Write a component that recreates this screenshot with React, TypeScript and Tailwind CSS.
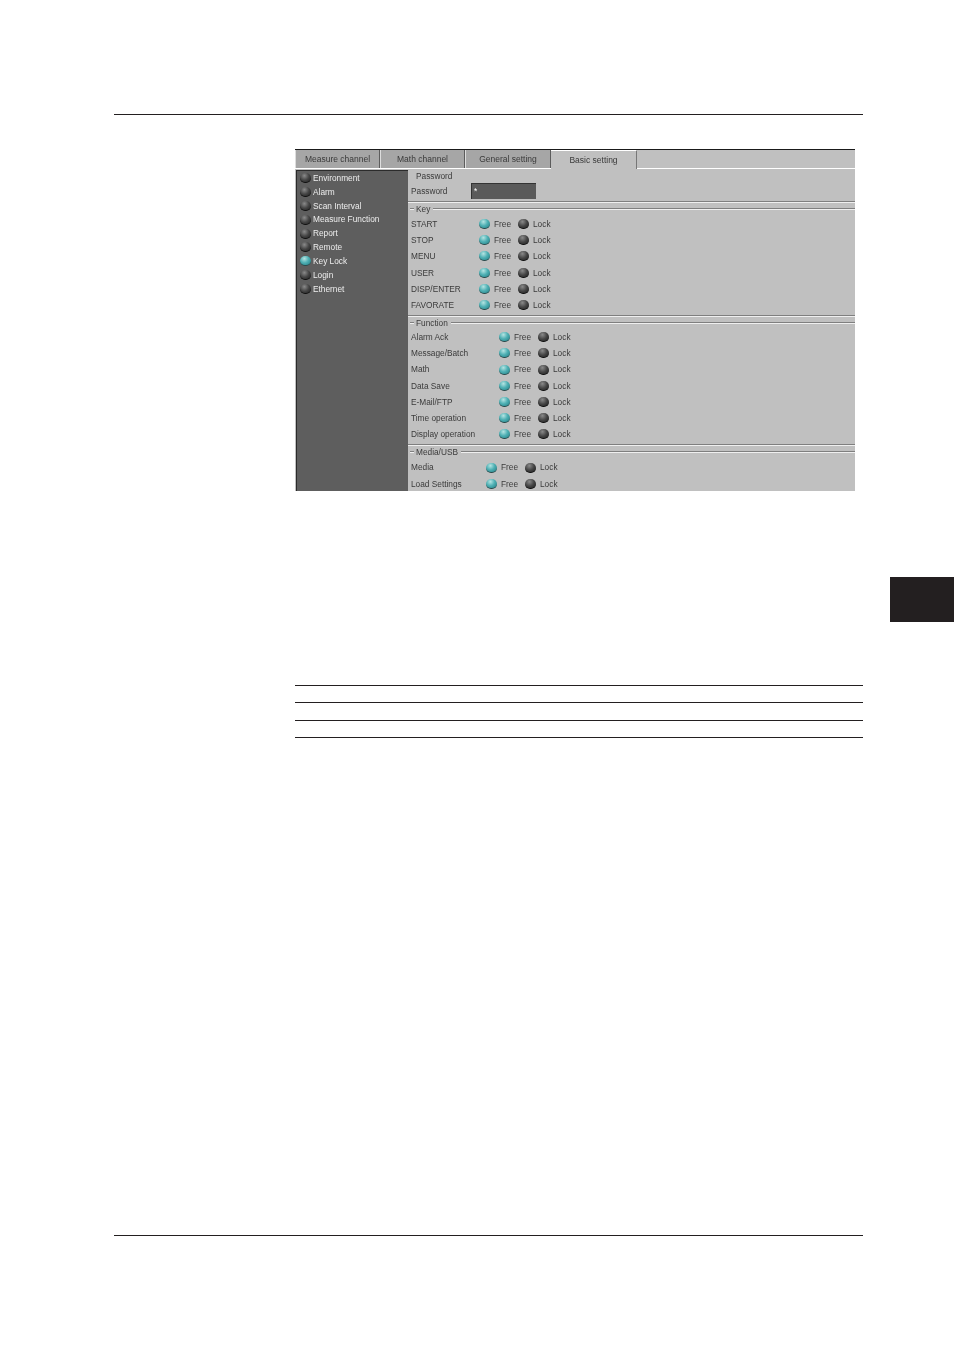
const tabs = [
  { name: "Measure channel", width: "w-[85px]" },
  { name: "Math channel", width: "w-[85px]" },
  { name: "General setting", width: "w-[86px]" },
]

const menu = ["Environment", "Alarm", "Scan Interval", "Measure Function", "Report", "Remote", "Key Lock", "Login", "Ethernet"]
const keyRows = ["START", "STOP", "MENU", "USER", "DISP/ENTER", "FAVORATE"]
const functionRows = ["Alarm Ack", "Message/Batch", "Math", "Data Save", "E-Mail/FTP", "Time operation", "Display operation"]
const mediaRows = ["Media", "Load Settings"]

const Led = ({ on }: { on: boolean }) => (
  <span
    className={
      on
        ? "block w-[11px] h-[10px] shrink-0 rounded-full border-b border-[#2c4a4c] bg-[radial-gradient(circle_at_40%_30%,#b5e4e2_0%,#4fb0b4_45%,#1f7a80_100%)]"
        : "block w-[11px] h-[10px] shrink-0 rounded-full border-b border-[#111111] bg-[radial-gradient(circle_at_40%_30%,#8a8a8a_0%,#444444_50%,#1c1c1c_100%)]"
    }
  />
)

const Row = ({ label, labelWidth }: { label: string; labelWidth: string }) => (
  <div className="flex items-center h-[16.2px] pl-[3px]">
    <span className={`${labelWidth} shrink-0 whitespace-nowrap`}>{label}</span>
    <Led on />
    <span className="w-[28px] pl-[4px] shrink-0">Free</span>
    <Led on={false} />
    <span className="pl-[4px]">Lock</span>
  </div>
)

const Separator = () => (
  <div className="h-[2px] border-t border-[#7f7f7f] bg-[#efefef]" />
)

const Legend = ({ title }: { title: string }) => (
  <div className="flex items-center h-[12px] pl-[2px]">
    <div className="w-[4px] h-[2px] border-t border-[#7f7f7f] bg-[#efefef]" />
    <span className="pl-[2px] pr-[3px]">{title}</span>
    <div className="flex-1 h-[2px] border-t border-[#7f7f7f] bg-[#efefef]" />
  </div>
)

const Section = ({ title, rows, labelWidth, className, rowsClassName }: { title: string; rows: string[]; labelWidth: string; className: string; rowsClassName: string }) => (
  <div className={className}>
    <Separator />
    <Legend title={title} />
    <div className={rowsClassName}>
      {rows.map((row) => (
        <Row key={row} label={row} labelWidth={labelWidth} />
      ))}
    </div>
  </div>
)

const Panel = () => (
  <div className="ml-[295px] mt-[34px] w-[560px] h-[342px] overflow-hidden bg-[#c0c0c0] border-t border-[#1a1a1a] flex flex-col font-['Liberation_Sans',sans-serif] text-[8.3px] leading-none text-[#3a3a3a] blur-[0.4px]">
    <div className="flex h-[19px] shrink-0 border-b border-white text-[8.5px]">
      {tabs.map((tab) => (
        <div key={tab.name} className={`${tab.width} h-[18px] flex items-center justify-center bg-[#a6a6a6] border-r border-[#5c5c5c] border-l border-l-[#dddddd]`}>
          {tab.name}
        </div>
      ))}
      <div className="w-[86px] h-[19px] -mb-px flex items-center justify-center bg-[#c0c0c0] border-t border-white border-r border-r-[#777777]">
        Basic setting
      </div>
    </div>
    <div className="flex flex-1 mt-[1px] pl-[1px] min-h-0">
      <div className="w-[112px] shrink-0 bg-[#5e5e5e] border-l border-t border-[#2b2b2b] pl-[3px] text-[#eeeeee]">
        {menu.map((item) => (
          <div key={item} className="flex items-center h-[13.9px] gap-[2px]">
            <Led on={item === "Key Lock"} />
            <span className="whitespace-nowrap">{item}</span>
          </div>
        ))}
      </div>
      <div className="flex-1 min-w-0">
        <div className="pl-[8px] h-[13px] flex items-center">Password</div>
        <div className="flex items-center h-[16px] pl-[3px]">
          <span className="w-[60px]">Password</span>
          <div className="w-[65px] h-[16px] bg-[#5a5a5a] border-t border-l border-[#333333] pl-[2px] pt-[3px] text-white">*</div>
        </div>
        <Section title="Key" rows={keyRows} labelWidth="w-[68px]" className="mt-[2px]" rowsClassName="mt-[1px]" />
        <Section title="Function" rows={functionRows} labelWidth="w-[88px]" className="mt-[2px]" rowsClassName="mt-0" />
        <Section title="Media/USB" rows={mediaRows} labelWidth="w-[75px]" className="mt-[2px]" rowsClassName="mt-[1px]" />
      </div>
    </div>
  </div>
)

const App = () => {
  return (
    <div className="w-[954px] h-[1350px] bg-white flex flex-col overflow-hidden">
      <div className="ml-[114px] mt-[114px] w-[749px] h-px shrink-0 bg-[#231f20]" />
      <Panel />
      <div className="ml-auto mt-[86px] w-[64px] h-[45px] shrink-0 bg-[#231f20]" />
      <div className="ml-[295px] mt-[63px] w-[568px] shrink-0 flex flex-col">
        <div className="h-[17px] border-t border-[#231f20]" />
        <div className="h-[18px] border-t border-[#231f20]" />
        <div className="h-[17px] border-t border-[#231f20]" />
        <div className="h-px bg-[#231f20]" />
      </div>
      <div className="ml-[114px] mt-[497px] w-[749px] h-px shrink-0 bg-[#231f20]" />
    </div>
  )
}

export default App
